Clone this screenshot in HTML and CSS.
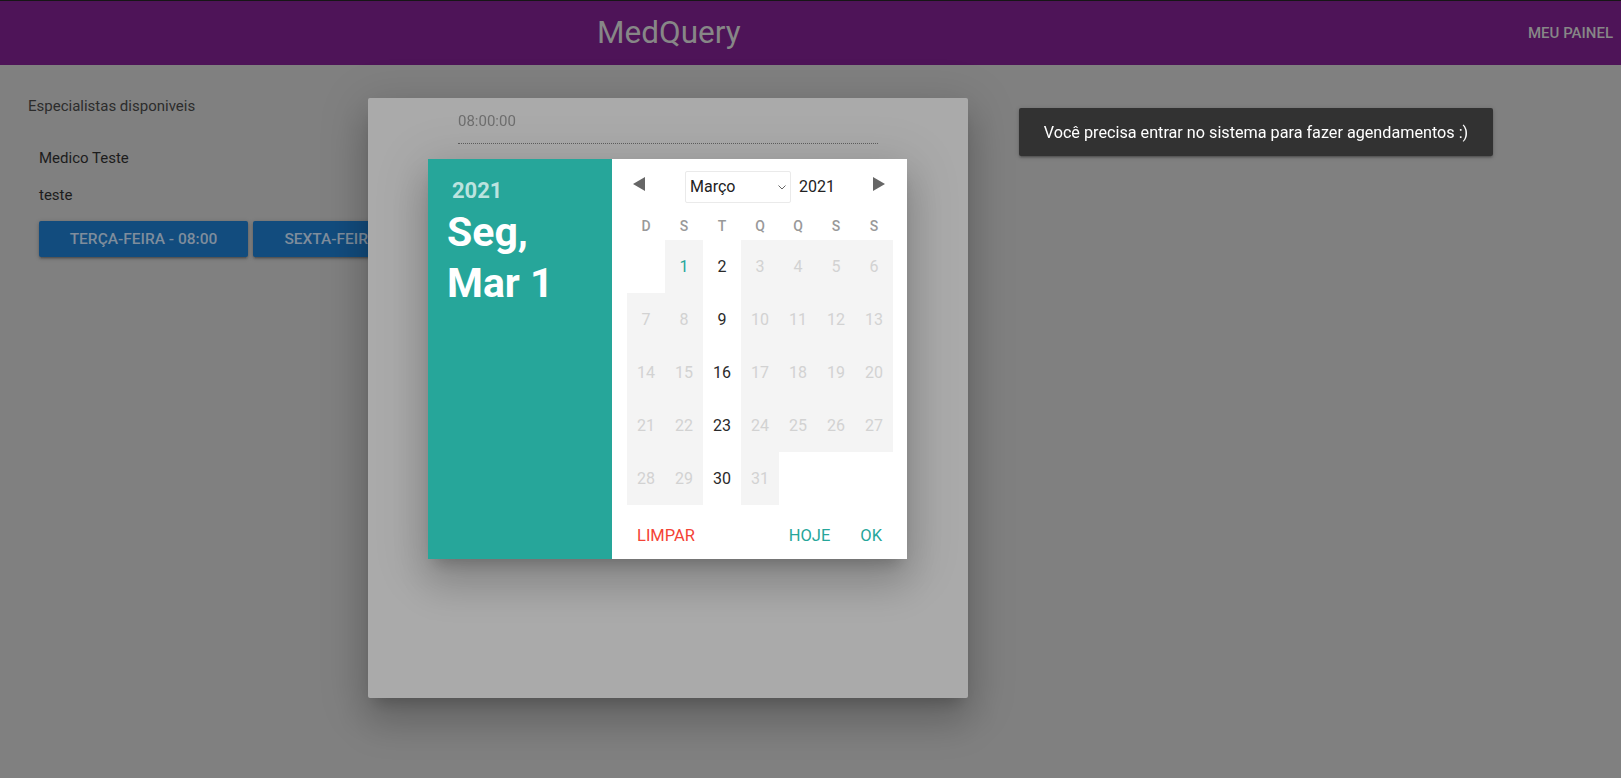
FILE: index.html
```html
<!DOCTYPE html>
<html lang="pt-BR">
<head>
<meta charset="utf-8">
<title>MedQuery</title>
<link rel="stylesheet" href="styles.css">
</head>
<body>
<header class="nav">
  <a class="brand">MedQuery</a>
  <ul class="nav-links"><li><a>MEU PAINEL</a></li></ul>
</header>

<main class="content">
  <p class="section-title">Especialistas disponiveis</p>
  <div class="doctor">
    <p class="doc-name">Medico Teste</p>
    <p class="doc-spec">teste</p>
    <div class="slots">
      <button class="slot">TERÇA-FEIRA - 08:00</button>
      <button class="slot">SEXTA-FEIRA - 08:00</button>
    </div>
  </div>
</main>

<div class="modal">
  <div class="time-field">08:00:00</div>
</div>

<div class="datepicker">
  <div class="date-display">
    <div class="year-text">2021</div>
    <div class="date-text">Seg,<br>Mar 1</div>
  </div>
  <div class="calendar">
    <div class="cal-head">
      <button class="nav-btn" aria-label="anterior">
        <svg width="12" height="14" viewBox="0 0 12 14"><polygon points="12,0 12,14 0,7" fill="#666"/></svg>
      </button>
      <div class="cal-title">
        <div class="month-select">Março
          <svg class="chev" width="8" height="5" viewBox="0 0 8 5"><polyline points="0.5,0.5 4,4 7.5,0.5" fill="none" stroke="#666" stroke-width="1"/></svg>
        </div>
        <div class="year-select">2021</div>
      </div>
      <button class="nav-btn" aria-label="próximo">
        <svg width="12" height="14" viewBox="0 0 12 14"><polygon points="0,0 0,14 12,7" fill="#666"/></svg>
      </button>
    </div>
    <div class="cal-grid">
      <div class="wd">D</div><div class="wd">S</div><div class="wd">T</div><div class="wd">Q</div><div class="wd">Q</div><div class="wd">S</div><div class="wd">S</div>

      <div class="day empty"></div><div class="day off today">1</div><div class="day">2</div><div class="day off">3</div><div class="day off">4</div><div class="day off">5</div><div class="day off">6</div>
      <div class="day off">7</div><div class="day off">8</div><div class="day">9</div><div class="day off">10</div><div class="day off">11</div><div class="day off">12</div><div class="day off">13</div>
      <div class="day off">14</div><div class="day off">15</div><div class="day">16</div><div class="day off">17</div><div class="day off">18</div><div class="day off">19</div><div class="day off">20</div>
      <div class="day off">21</div><div class="day off">22</div><div class="day">23</div><div class="day off">24</div><div class="day off">25</div><div class="day off">26</div><div class="day off">27</div>
      <div class="day off">28</div><div class="day off">29</div><div class="day">30</div><div class="day off">31</div><div class="day empty"></div><div class="day empty"></div><div class="day empty"></div>
    </div>
    <div class="cal-foot">
      <button class="flat clear">LIMPAR</button>
      <span class="spacer"></span>
      <button class="flat teal">HOJE</button>
      <button class="flat teal ok">OK</button>
    </div>
  </div>
</div>

<div class="toast">Você precisa entrar no sistema para fazer agendamentos :)</div>
</body>
</html>
```

FILE: styles.css
```css
* { box-sizing: border-box; }

html, body {
  margin: 0;
  padding: 0;
}

body {
  font-family: Roboto, "Liberation Sans", Arial, sans-serif;
  background: #808080;
  width: 1621px;
  height: 778px;
  overflow: hidden;
}

button {
  font-family: inherit;
  border: 0;
  background: none;
  cursor: pointer;
  padding: 0;
}

/* ---------- top bar ---------- */
.nav {
  display: flex;
  align-items: center;
  height: 65px;
  border-top: 1px solid #161616;
  background: #4e1458;
}

.brand {
  margin-left: 597px;
  font-size: 31.5px;
  line-height: 64px;
  color: #878787;
}

.nav-links {
  list-style: none;
  margin: 0 0 0 auto;
  padding: 0 8px 0 0;
}

.nav-links a {
  font-size: 15px;
  font-weight: 500;
  line-height: 64px;
  color: #878787;
}

/* ---------- content ---------- */
.content {
  padding: 29px 0 0 28px;
}

.content p {
  margin: 0;
  font-size: 15px;
  line-height: 24px;
}

.content .section-title {
  color: #2c2c2c;
}

.doctor {
  margin-top: 28px;
  padding-left: 11px;
}

.content .doc-name { color: #1c1c1c; }

.content .doc-spec {
  margin-top: 13px;
  color: #1c1c1c;
}

.slots {
  display: flex;
  gap: 5px;
  margin-top: 14px;
}

.slot {
  width: 209px;
  height: 36px;
  border-radius: 2px;
  background: #124c7e;
  color: #7f8d9c;
  font-size: 15.5px;
  font-weight: 500;
  box-shadow: 0 2px 2px 0 rgba(0,0,0,0.14), 0 3px 1px -2px rgba(0,0,0,0.12), 0 1px 5px 0 rgba(0,0,0,0.2);
}

/* ---------- underlying modal ---------- */
.modal {
  position: fixed;
  left: 368px;
  top: 98px;
  width: 600px;
  height: 600px;
  background: #aaaaaa;
  border-radius: 2px;
  box-shadow: 0 24px 38px 3px rgba(0,0,0,0.14), 0 9px 46px 8px rgba(0,0,0,0.12), 0 11px 15px -7px rgba(0,0,0,0.2);
  padding: 13px 0 0 90px;
}

.time-field {
  width: 420px;
  height: 33px;
  font-size: 15px;
  line-height: 20px;
  color: #6e6e6e;
  border-bottom: 1px dotted #5e5e5e;
}

/* ---------- datepicker ---------- */
.datepicker {
  position: fixed;
  left: 428px;
  top: 159px;
  width: 479px;
  height: 400px;
  display: flex;
  box-shadow: 0 24px 38px 3px rgba(0,0,0,0.14), 0 9px 46px 8px rgba(0,0,0,0.12), 0 11px 15px -7px rgba(0,0,0,0.2);
}

.date-display {
  width: 184px;
  background: #26a69a;
  padding: 20px 0 0 19px;
  color: #fff;
}

.year-text {
  margin-left: 5px;
  font-size: 22px;
  font-weight: 700;
  line-height: 24px;
  color: rgba(255,255,255,0.7);
}

.date-text {
  margin-top: 4px;
  font-size: 41px;
  font-weight: 700;
  line-height: 51px;
}

.calendar {
  flex: 1;
  background: #fff;
  padding: 12px 14px 0 15px;
  display: flex;
  flex-direction: column;
}

.cal-head {
  display: flex;
  align-items: center;
  justify-content: space-between;
  height: 32px;
  margin-right: 2px;
}

.nav-btn {
  width: 24px;
  height: 32px;
  display: flex;
  align-items: center;
  justify-content: center;
  margin-top: -6px;
}

.cal-title {
  display: flex;
  align-items: center;
  gap: 8px;
  margin-left: 6px;
}

.month-select {
  position: relative;
  width: 106px;
  height: 32px;
  border: 1px solid #eaeaea;
  border-radius: 2px;
  padding: 0 0 0 4px;
  font-size: 16px;
  line-height: 30px;
  color: #222;
}

.chev {
  position: absolute;
  right: 4px;
  top: 13px;
}

.year-select {
  width: 40px;
  font-size: 16px;
  line-height: 30px;
  color: #222;
}

.cal-grid {
  display: grid;
  grid-template-columns: repeat(7, 1fr);
  grid-template-rows: 27px repeat(5, 53px);
  width: 266px;
  margin-top: 10px;
}

.wd {
  text-align: center;
  font-size: 14px;
  font-weight: 500;
  line-height: 27px;
  color: #999;
}

.day {
  display: flex;
  align-items: center;
  justify-content: center;
  font-size: 16px;
  color: #2a2a2a;
}

.day.off {
  background: #f4f4f4;
  color: #d2d2d2;
}

.day.today { color: #26a69a; }

.cal-foot {
  display: flex;
  align-items: flex-start;
  padding: 13px 11px 0 11px;
  margin-left: -15px;
  margin-right: -14px;
}

.spacer { flex: 1; }

.flat {
  height: 36px;
  line-height: 36px;
  padding: 0 14px;
  font-size: 16.5px;
}

.clear { color: #f44336; }
.teal { color: #26a69a; }
.ok { margin-left: 2px; }

/* ---------- toast ---------- */
.toast {
  position: fixed;
  left: 1019px;
  top: 108px;
  width: 474px;
  height: 48px;
  display: flex;
  align-items: center;
  justify-content: center;
  background: #323232;
  color: #fff;
  font-size: 16.2px;
  border-radius: 2px;
  box-shadow: 0 2px 2px 0 rgba(0,0,0,0.14), 0 3px 1px -2px rgba(0,0,0,0.12), 0 1px 5px 0 rgba(0,0,0,0.2);
}
```
